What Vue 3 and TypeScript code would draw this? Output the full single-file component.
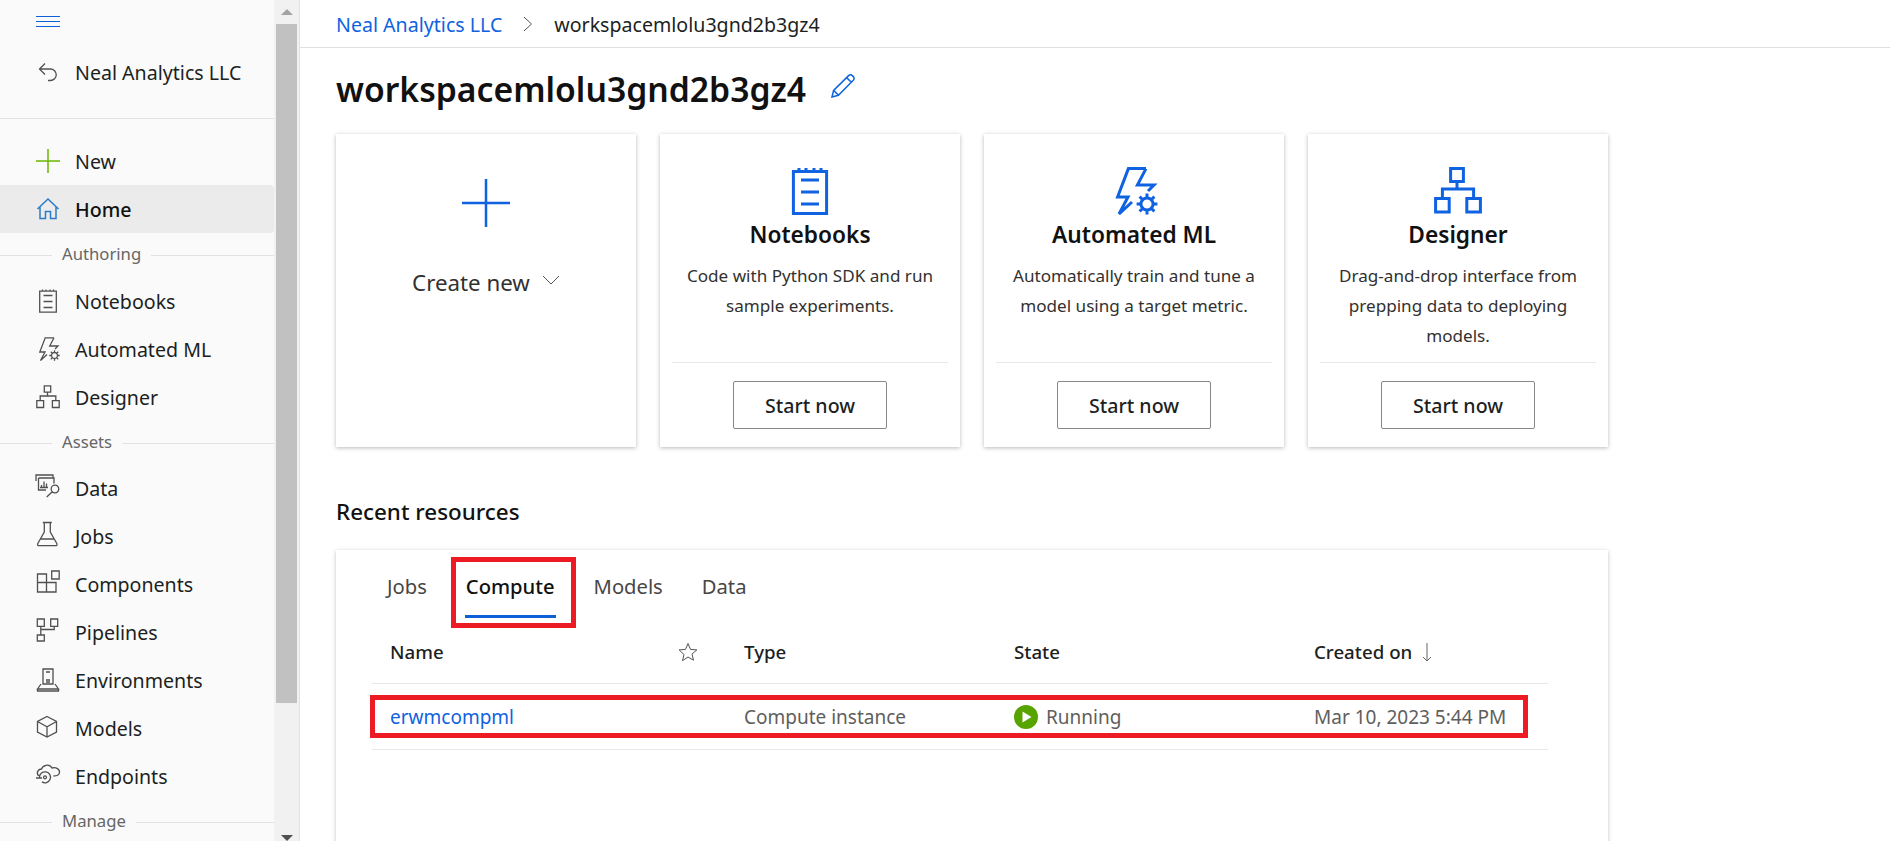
<template>
  <div class="page">
    <aside class="sidebar">
      <nav class="nav">
        <div class="hamburger"><span></span><span></span><span></span></div>
        <div class="back-block">
          <div class="nav-row">
            <svg class="icon" viewBox="0 0 24 24"><path :d="icons.back" /></svg>
            <span>Neal Analytics LLC</span>
          </div>
        </div>
        <div class="nav-list">
          <template v-for="item in navItems" :key="item.label">
            <div v-if="item.section" class="nav-section">
              <span>{{ item.label }}</span>
            </div>
            <div v-else class="nav-row" :class="{ active: item.label === 'Home' }">
              <svg class="icon" :class="item.icon" viewBox="0 0 24 24"><path :d="icons[item.icon!]" /></svg>
              <span>{{ item.label }}</span>
            </div>
          </template>
        </div>
      </nav>
      <div class="scrollbar">
        <div class="arrow-up"></div>
        <div class="thumb"></div>
        <div class="arrow-down"></div>
      </div>
    </aside>

    <main class="main">
      <header class="breadcrumb">
        <a class="link">Neal Analytics LLC</a>
        <svg class="crumb-chevron" viewBox="0 0 10 16"><path d="M1 1l7.5 7L1 15" /></svg>
        <span>workspacemlolu3gnd2b3gz4</span>
      </header>

      <div class="content">
        <div class="title-row">
          <h1>workspacemlolu3gnd2b3gz4</h1>
          <svg class="pencil" viewBox="0 0 24 24">
            <path d="M1 23l1.6-6.6L17.6 1.6a2.6 2.6 0 0 1 3.7 0l1 1a2.6 2.6 0 0 1 0 3.7L7.4 21.3zM2.6 16.4l5 4.9M15.6 3.6l5 4.9" />
          </svg>
        </div>

        <section class="cards">
          <div class="card create-card">
            <svg class="create-plus" viewBox="0 0 48 48"><path d="M24 0v48M0 24h48" /></svg>
            <div class="create-label">
              Create new
              <svg class="create-chevron" viewBox="0 0 18 10"><path d="M1 1l8 8 8-8" /></svg>
            </div>
          </div>
          <div v-for="card in cards" :key="card.title" class="card">
            <svg class="card-icon" viewBox="0 0 24 24"><path :d="icons[card.icon]" /></svg>
            <h3>{{ card.title }}</h3>
            <p>{{ card.text }}</p>
            <div class="card-footer">
              <button type="button">Start now</button>
            </div>
          </div>
        </section>

        <h2>Recent resources</h2>

        <section class="resources">
          <div class="tabs">
            <div v-for="tab in tabs" :key="tab" class="tab" :class="{ selected: tab === 'Compute' }">
              {{ tab }}
              <div v-if="tab === 'Compute'" class="mark mark-tab"></div>
            </div>
          </div>

          <div class="table-row table-head">
            <div>Name</div>
            <div>
              <svg class="star" viewBox="0 0 20 20">
                <path d="M10 1.5l2.5 5.9 6.4.5-4.9 4.1 1.5 6.2L10 15l-5.5 3.7L6 12.5 1.1 7.9l6.4-.5z" />
              </svg>
            </div>
            <div>Type</div>
            <div>State</div>
            <div class="created">
              Created on
              <svg class="sort" viewBox="0 0 10 20"><path d="M5 1v18M1 15l4 4 4-4" /></svg>
            </div>
          </div>

          <div class="table-row table-body">
            <div class="mark mark-row"></div>
            <div class="link">erwmcompml</div>
            <div></div>
            <div>Compute instance</div>
            <div class="state">
              <svg class="state-icon" viewBox="0 0 24 24">
                <circle cx="12" cy="12" r="12" fill="#57a300" />
                <path d="M8.5 6.5v11l9-5.500z" fill="#fff" />
              </svg>
              Running
            </div>
            <div>Mar 10, 2023 5:44 PM</div>
          </div>
        </section>
      </div>
    </main>
  </div>
</template>

<script setup lang="ts">
interface NavItem {
  label: string
  icon?: string
  section?: boolean
}

// all icons share a 24 box, the cards just draw them at double size
const icons: Record<string, string> = {
  back: 'M9 3.5L3.5 9 9 14.5M3.5 9h11a5.6 5.6 0 0 1 0 11.5H12',
  plus: 'M12 0v24M0 12h24',
  home: 'M1.5 12L12 2l10.5 10M4 10v11.5h5.5V14.5h5v7H20V10',
  notebook:
    'M3.7 2.2h16.6v21H3.7zM6.5 .5v1.7M10 .5v1.7M14 .5v1.7M17.5 .5v1.7M7.5 6.5h9M7.5 12.5h9M7.5 18.5h9',
  ml: 'M18 .8H9.2L3.8 15H9L4.5 23.5 11 17.5M18 .8L13.7 9H22l-3 3M18.5 15.500a3 3 0 1 0 .01 0zM18.500 13.300v2.200M18.500 21.500v2.200M13.300 18.500h2.200M21.500 18.500h2.200M14.800 14.800l1.600 1.600M20.600 20.600l1.600 1.600M22.200 14.800l-1.600 1.600M16.400 20.600l-1.600 1.600',
  designer:
    'M8.3 .8h6.4v6.4H8.3zM.8 15.7h6.8v6.8H.8zM16.4 15.7h6.8v6.8h-6.8zM11.5 7.2V11M4.2 15.7V11h15.6v4.7',
  data: 'M0 5V-1h17V1.500M2.500 2h15.500v5.500M2.500 2v12h7.500M5.500 11V9M8 11V5.500M10.500 11V7.500M4 11.500h8M19 9.200a3.800 3.800 0 1 1 0 7.600 3.800 3.800 0 0 1 0-7.600zM16.300 15.700L10.700 21',
  jobs: 'M6.800-1.500h9M8.300-1.500V8L1.800 19.500c-.6 1.300 0 2.200 1.200 2.200h16.600c1.200 0 1.800-.9 1.200-2.200L14.300 8V-1.500M4.500 15h13.600',
  components: 'M1.500 2h9v18h-9zM1.500 10.500h18.500v9.500H10.500M15.700-1h7.500v8h-7.500z',
  pipelines: 'M1.300-1h7v7.300h-7zM14.700-1h7v7.300h-7zM1.300 15h7v6h-7zM4.800 6.300V15M4.800 9.500H18.200V6.300',
  environments:
    'M7 1h10v15H7zM10 4h4M10 12h4M10 14h4M5 16l-3.500 5h21L19 16M1.500 21v2h21v-2',
  models: 'M11 .5l9.500 5v10.500l-9.500 5-9.500-5V5.500zM1.500 5.500L11 10.800l9.500-5.300M11 10.800V21',
  endpoints:
    'M2.500 12C-.5 7.500 3 5 5.500 5 6.500 1.500 13-1 16 4c4-1 8 1 7.500 4.500-.3 2.500-3 3.500-6 3.500M3.500 13.300a5.500 5.500 0 1 1 2.500 4.600M9 11.800a1.500 1.500 0 1 1 0 3 1.500 1.500 0 0 1 0-3zM0 14h6',
}

const navItems: NavItem[] = [
  { label: 'New', icon: 'plus' },
  { label: 'Home', icon: 'home' },
  { label: 'Authoring', section: true },
  { label: 'Notebooks', icon: 'notebook' },
  { label: 'Automated ML', icon: 'ml' },
  { label: 'Designer', icon: 'designer' },
  { label: 'Assets', section: true },
  { label: 'Data', icon: 'data' },
  { label: 'Jobs', icon: 'jobs' },
  { label: 'Components', icon: 'components' },
  { label: 'Pipelines', icon: 'pipelines' },
  { label: 'Environments', icon: 'environments' },
  { label: 'Models', icon: 'models' },
  { label: 'Endpoints', icon: 'endpoints' },
  { label: 'Manage', section: true },
]

const cards = [
  { title: 'Notebooks', icon: 'notebook', text: 'Code with Python SDK and run sample experiments.' },
  { title: 'Automated ML', icon: 'ml', text: 'Automatically train and tune a model using a target metric.' },
  { title: 'Designer', icon: 'designer', text: 'Drag-and-drop interface from prepping data to deploying models.' },
]

const tabs = ['Jobs', 'Compute', 'Models', 'Data']
</script>

<style>
html,
body {
  margin: 0;
  background: #fff;
}
</style>

<style scoped>
.page {
  display: flex;
  height: 841px;
  overflow: hidden;
  font-family: "Noto Sans", "Open Sans", sans-serif;
  font-size: 19px;
  color: #201f1e;
}

/* sidebar */
.sidebar {
  display: flex;
  flex: none;
  width: 300px;
  border-right: 1px solid #e3e3e3;
  box-sizing: border-box;
}

.nav {
  width: 274px;
  flex: none;
  background: #fafafa;
  overflow: hidden;
  font-size: 19.6px;
}

.hamburger {
  display: flex;
  flex-direction: column;
  gap: 4px;
  width: 24px;
  height: 32px;
  padding: 16px 0 0 36px;
}

.hamburger span {
  height: 1px;
  background: #0f5fd8;
}

.back-block {
  padding-bottom: 22px;
  border-bottom: 1px solid #e1e1e1;
  margin-bottom: 18px;
}

.nav-row {
  display: flex;
  align-items: center;
  gap: 15px;
  height: 48px;
  padding-left: 36px;
}

.nav-row span {
  padding-top: 1px;
}

.nav-row.active {
  background: #ebebeb;
  border-radius: 0 4px 4px 0;
  font-weight: 500;
  color: #111;
}

.icon {
  flex: none;
  width: 24px;
  height: 24px;
  overflow: visible;
  fill: none;
  stroke: #505050;
  stroke-width: 1.3;
}

.icon.plus {
  stroke: #6bb700;
  stroke-width: 1.5;
}

.icon.home {
  stroke: #2b7cc7;
  stroke-width: 1.5;
}

.nav-section {
  display: flex;
  align-items: center;
  gap: 10px;
  height: 43.5px;
  font-size: 16.7px;
  color: #666;
}

.nav-section span {
  margin-bottom: 2px;
}

.nav-section::before {
  content: "";
  width: 52px;
  height: 1px;
  margin-top: 2px;
  background: #e1e1e1;
}

.nav-section::after {
  content: "";
  flex: 1;
  height: 1px;
  margin-top: 2px;
  background: #e1e1e1;
}

.scrollbar {
  display: flex;
  flex-direction: column;
  flex: 1;
  background: #f1f1f1;
  align-items: center;
}

.arrow-up {
  width: 0;
  height: 0;
  margin: 9px 0;
  border: 6px solid transparent;
  border-top: 0;
  border-bottom-color: #a3a3a3;
}

.thumb {
  width: 21px;
  height: 680px;
  background: #c1c1c1;
}

.arrow-down {
  width: 0;
  height: 0;
  margin-top: 132px;
  border: 6px solid transparent;
  border-bottom: 0;
  border-top-color: #505050;
}

/* main */
.main {
  flex: 1;
  min-width: 0;
}

.link {
  color: #0f62e0;
}

.breadcrumb {
  display: flex;
  align-items: center;
  height: 46px;
  padding: 1px 0 0 36px;
  border-bottom: 1px solid #e0e0e0;
  font-size: 19.6px;
}

.crumb-chevron {
  width: 10px;
  height: 16px;
  margin: 0 21px;
  fill: none;
  stroke: #555;
}

.content {
  padding-left: 36px;
}

.title-row {
  display: flex;
  align-items: center;
  gap: 25px;
  height: 81px;
  margin-bottom: 5px;
}

h1 {
  margin: 0;
  font-size: 33.7px;
  font-weight: 600;
  color: #111;
}

.pencil {
  width: 24px;
  height: 24px;
  margin-top: -5px;
  fill: none;
  stroke: #0f62e0;
  stroke-width: 1.5;
}

.cards {
  display: flex;
  gap: 24px;
}

.card {
  display: flex;
  flex-direction: column;
  align-items: center;
  width: 300px;
  height: 313px;
  padding: 33px 12px 0;
  box-sizing: border-box;
  background: #fff;
  box-shadow: 0 1px 4px rgba(0, 0, 0, 0.28);
  text-align: center;
}

.card-icon {
  flex: none;
  width: 48px;
  height: 48px;
  fill: none;
  stroke: #0f62e0;
  stroke-width: 1.5;
}

.card h3 {
  margin: 0;
  height: 40px;
  line-height: 40px;
  font-size: 22.7px;
  font-weight: 600;
  color: #111;
}

.card p {
  flex: 1;
  margin: 6px 0 0;
  font-size: 17.1px;
  line-height: 30px;
  color: #323130;
}

.card-footer {
  width: 100%;
  height: 85px;
  padding-top: 18px;
  box-sizing: border-box;
  border-top: 1px solid #e8e8e8;
}

button {
  width: 154px;
  height: 48px;
  border: 1px solid #8a8886;
  border-radius: 2px;
  background: #fff;
  font: 500 19.6px "Noto Sans", sans-serif;
  color: #201f1e;
}

.create-card {
  padding-top: 45px;
}

.create-plus {
  width: 48px;
  height: 48px;
  margin-left: -1px;
  fill: none;
  stroke: #0f62e0;
  stroke-width: 2.5;
}

.create-label {
  display: flex;
  align-items: center;
  gap: 12px;
  height: 30px;
  margin-top: 40px;
  font-size: 22.3px;
  color: #323130;
}

.create-chevron {
  width: 18px;
  height: 10px;
  margin-top: -4px;
  fill: none;
  stroke: #555;
}

h2 {
  height: 32px;
  margin: 49px 0 22px;
  font-size: 22.4px;
  line-height: 32px;
  font-weight: 500;
  color: #111;
}

.resources {
  width: 1272px;
  height: 400px;
  padding: 18px 0 0 36px;
  box-sizing: border-box;
  background: #fff;
  box-shadow: 0 1px 4px rgba(0, 0, 0, 0.25);
}

.tabs {
  display: flex;
  gap: 37px;
  height: 50px;
  padding-left: 14px;
  font-size: 20.2px;
}

.tab {
  position: relative;
  height: 47px;
  padding: 0 1px;
  line-height: 37px;
  color: #484644;
}

.tab.selected {
  font-weight: 500;
  color: #111;
  border-bottom: 3px solid #0f5fd8;
}

.mark {
  position: absolute;
  box-sizing: border-box;
  border: 5px solid #ed1c24;
}

.mark-tab {
  top: -11px;
  left: -14px;
  right: -20px;
  height: 71px;
}

.table-row {
  position: relative;
  display: grid;
  grid-template-columns: 300px 72px 270px 300px 234px;
  align-items: center;
  width: 1176px;
  height: 66px;
  box-sizing: border-box;
  border-bottom: 1px solid #e8e8e8;
}

.table-head {
  padding-top: 2px;
  font-weight: 500;
  font-size: 18.7px;
  color: #201f1e;
}

.table-head > div:first-child {
  padding-left: 18px;
}

.table-body > .link {
  padding-left: 18px;
}

.table-body {
  color: #605e5c;
}

.mark-row {
  top: 11px;
  left: -2px;
  width: 1158px;
  height: 43px;
}

.star {
  display: block;
  width: 20px;
  height: 20px;
  margin-left: 6px;
  fill: none;
  stroke: #555;
}

.created {
  display: flex;
  align-items: center;
  gap: 10px;
}

.sort {
  width: 10px;
  height: 20px;
  fill: none;
  stroke: #666;
}

.state {
  display: flex;
  align-items: center;
  gap: 8px;
}

.state-icon {
  width: 24px;
  height: 24px;
}
</style>
